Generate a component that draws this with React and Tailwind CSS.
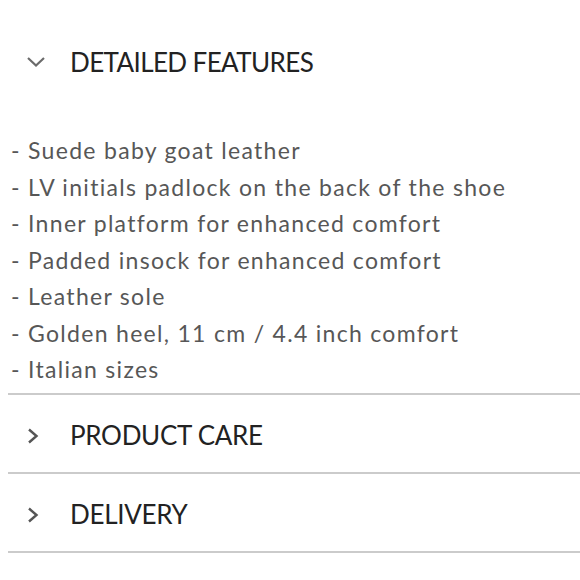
import React, { useState } from 'react';

const features = [
  'Suede baby goat leather',
  'LV initials padlock on the back of the shoe',
  'Inner platform for enhanced comfort',
  'Padded insock for enhanced comfort',
  'Leather sole',
  'Golden heel, 11 cm / 4.4 inch comfort',
  'Italian sizes',
];

function ChevronDown() {
  return (
    <svg width="18" height="10" viewBox="0 0 18 10" fill="none" className="shrink-0">
      <polyline points="1,1 9,8.5 17,1" stroke="#6b6b6b" strokeWidth="2.2" />
    </svg>
  );
}

function ChevronRight() {
  return (
    <svg width="12" height="16" viewBox="0 0 12 16" fill="none" className="shrink-0">
      <polyline points="2,1.5 9.5,8 2,14.5" stroke="#555" strokeWidth="2.4" />
    </svg>
  );
}

function Row({ title }) {
  return (
    <button className="flex h-[79px] w-full items-center border-b-2 border-[#cbcbcb] pt-[5px] text-left">
      <span className="ml-[19px] flex w-[43px]">
        <ChevronRight />
      </span>
      <span className="text-[26px] tracking-[-0.3px] text-[#222]">{title}</span>
    </button>
  );
}

export default function App() {
  const [open] = useState(true);

  return (
    <div className="min-h-[580px] w-[580px] bg-white pl-2 font-['Lato','Liberation_Sans',sans-serif]">
      <div className="pt-[22px]">
        <button className="flex h-[80px] w-full items-center text-left">
          <span className="ml-[19px] flex w-[43px]">
            <ChevronDown />
          </span>
          <span className="text-[26px] tracking-[-0.6px] text-[#222]">DETAILED FEATURES</span>
        </button>
        {open && (
          <ul className="border-b-2 border-[#cbcbcb] pt-[30px] pb-[5px] pl-[3px] text-[23px] leading-[36.5px] tracking-[1.3px] text-[#575757]">
            {features.map((f) => (
              <li key={f}>- {f}</li>
            ))}
          </ul>
        )}
      </div>
      <Row title="PRODUCT CARE" />
      <Row title="DELIVERY" />
    </div>
  );
}
